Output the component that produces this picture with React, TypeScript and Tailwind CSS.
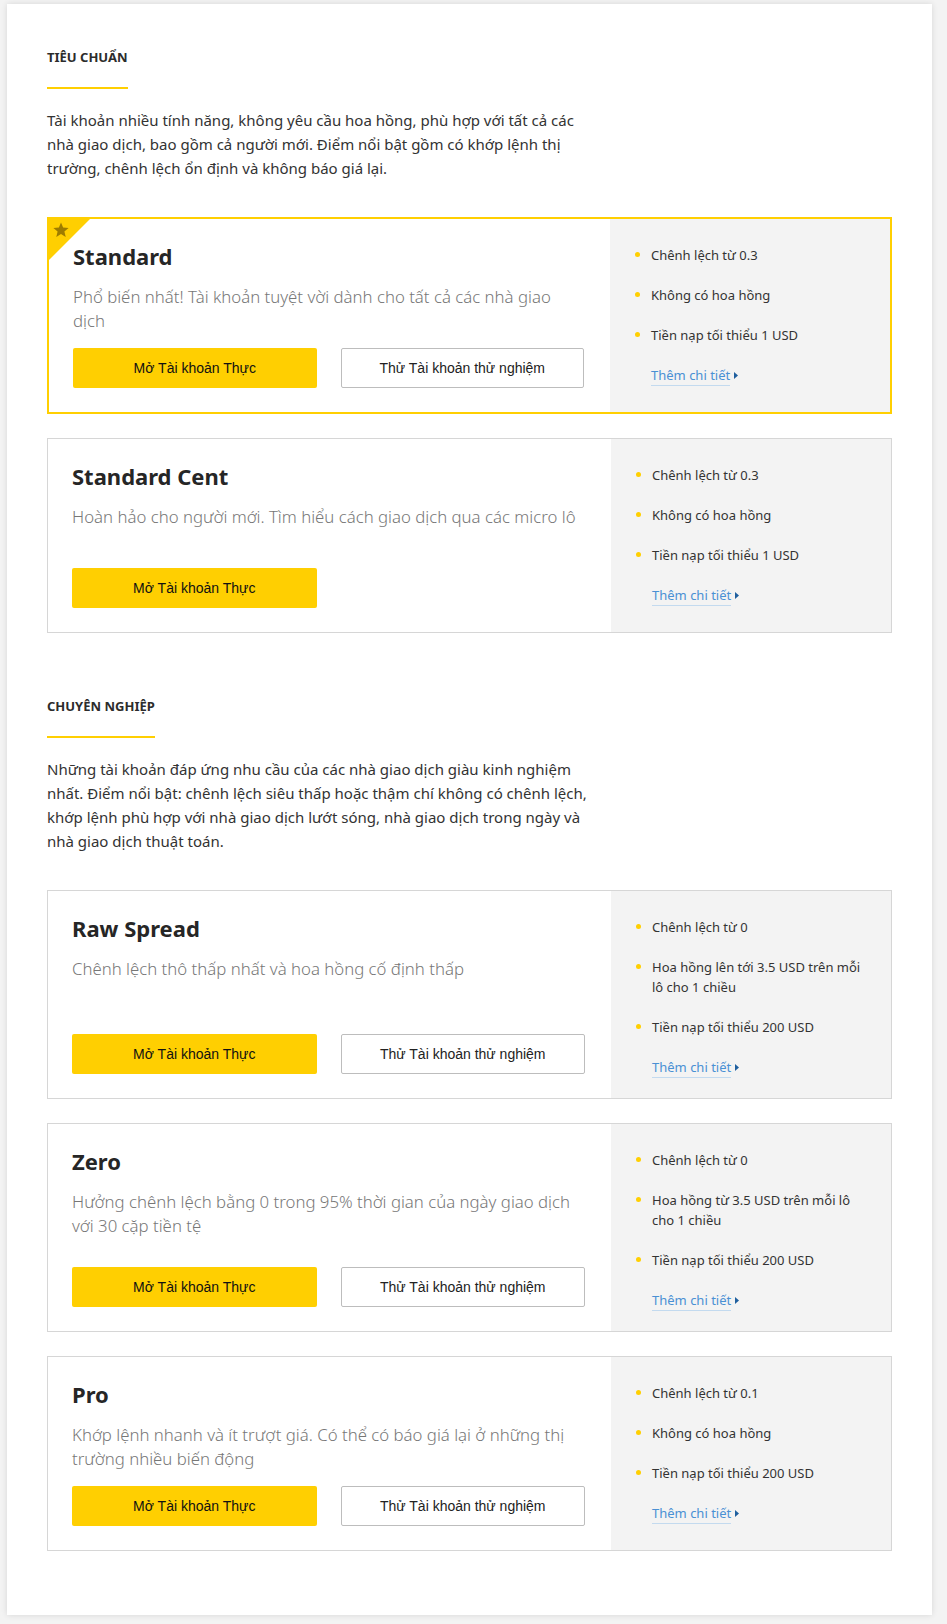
import React from "react"

type Account = {
  name: string
  desc: string[]
  features: string[][]
  demo: boolean
  featured?: boolean
}

const SECTIONS: { title: string; intro: string[]; accounts: Account[] }[] = [
  {
    title: "Tiêu chuẩn",
    intro: [
      "Tài khoản nhiều tính năng, không yêu cầu hoa hồng, phù hợp với tất cả các",
      "nhà giao dịch, bao gồm cả người mới. Điểm nổi bật gồm có khớp lệnh thị",
      "trường, chênh lệch ổn định và không báo giá lại.",
    ],
    accounts: [
      {
        name: "Standard",
        desc: ["Phổ biến nhất! Tài khoản tuyệt vời dành cho tất cả các nhà giao", "dịch"],
        features: [["Chênh lệch từ 0.3"], ["Không có hoa hồng"], ["Tiền nạp tối thiểu 1 USD"]],
        demo: true,
        featured: true,
      },
      {
        name: "Standard Cent",
        desc: ["Hoàn hảo cho người mới. Tìm hiểu cách giao dịch qua các micro lô"],
        features: [["Chênh lệch từ 0.3"], ["Không có hoa hồng"], ["Tiền nạp tối thiểu 1 USD"]],
        demo: false,
      },
    ],
  },
  {
    title: "Chuyên nghiệp",
    intro: [
      "Những tài khoản đáp ứng nhu cầu của các nhà giao dịch giàu kinh nghiệm",
      "nhất. Điểm nổi bật: chênh lệch siêu thấp hoặc thậm chí không có chênh lệch,",
      "khớp lệnh phù hợp với nhà giao dịch lướt sóng, nhà giao dịch trong ngày và",
      "nhà giao dịch thuật toán.",
    ],
    accounts: [
      {
        name: "Raw Spread",
        desc: ["Chênh lệch thô thấp nhất và hoa hồng cố định thấp"],
        features: [
          ["Chênh lệch từ 0"],
          ["Hoa hồng lên tới 3.5 USD trên mỗi", "lô cho 1 chiều"],
          ["Tiền nạp tối thiểu 200 USD"],
        ],
        demo: true,
      },
      {
        name: "Zero",
        desc: ["Hưởng chênh lệch bằng 0 trong 95% thời gian của ngày giao dịch", "với 30 cặp tiền tệ"],
        features: [
          ["Chênh lệch từ 0"],
          ["Hoa hồng từ 3.5 USD trên mỗi lô", "cho 1 chiều"],
          ["Tiền nạp tối thiểu 200 USD"],
        ],
        demo: true,
      },
      {
        name: "Pro",
        desc: ["Khớp lệnh nhanh và ít trượt giá. Có thể có báo giá lại ở những thị", "trường nhiều biến động"],
        features: [["Chênh lệch từ 0.1"], ["Không có hoa hồng"], ["Tiền nạp tối thiểu 200 USD"]],
        demo: true,
      },
    ],
  },
]

function Lines({ lines }: { lines: string[] }) {
  return (
    <>
      {lines.map((line, i) => (
        <React.Fragment key={i}>
          {i > 0 && <br />}
          {line}
        </React.Fragment>
      ))}
    </>
  )
}

function StarCorner() {
  return (
    <svg className="absolute left-0 top-0" width="41" height="41" viewBox="0 0 41 41">
      <polygon points="0,0 41,0 0,41" fill="#ffcf01" />
      <polygon
        points="12,3.5 14.1,8.6 19.6,9 15.4,12.6 16.7,18 12,15.1 7.3,18 8.6,12.6 4.4,9 9.9,8.6"
        fill="#9e7c00"
      />
    </svg>
  )
}

function AccountCard({ account }: { account: Account }) {
  return (
    <div
      className={`relative flex ${
        account.featured ? "border-2 border-[#ffcf01]" : "border border-[#d6d6d6]"
      }`}
    >
      {account.featured && <StarCorner />}

      {/* Left: name, text, buttons */}
      <div className="flex flex-1 flex-col pb-6 pl-6 pr-[26px] pt-[22px]">
        <h3 className="text-[22px] font-bold leading-[30px] text-[#262626]">{account.name}</h3>
        <p className="mt-[14px] min-h-[63px] flex-1 pb-[15px] text-[16.8px] font-light leading-6 text-[#777]">
          <Lines lines={account.desc} />
        </p>
        <div className="grid grid-cols-2 gap-6 font-['Liberation_Sans',Arial,sans-serif] text-[14px]">
          <button className="h-10 rounded-[2px] bg-[#ffcf01] text-[#111]">Mở Tài khoản Thực</button>
          {account.demo && (
            <button className="h-10 rounded-[2px] border border-[#bdbdbd] bg-white text-[#222]">
              Thử Tài khoản thử nghiệm
            </button>
          )}
        </div>
      </div>

      {/* Right: features */}
      <div className="w-[280px] shrink-0 bg-[#f3f3f3] pb-5 pl-[25px] pr-5 pt-[26px]">
        <ul className="flex flex-col gap-5 text-[13px] leading-5 text-[#333]">
          {account.features.map((f, i) => (
            <li key={i} className="flex items-start">
              <span className="mr-[11px] mt-[7px] h-[5px] w-[5px] shrink-0 rounded-full bg-[#ffcf01]" />
              <span>
                <Lines lines={f} />
              </span>
            </li>
          ))}
          <li className="flex items-center pl-4">
            <span className="border-b border-[#c3daef] text-[#4a90d4]">Thêm chi tiết</span>
            <svg className="ml-[4px]" width="4" height="7" viewBox="0 0 4 7">
              <polygon points="0,0 4,3.5 0,7" fill="#1f5f9e" />
            </svg>
          </li>
        </ul>
      </div>
    </div>
  )
}

export default function App() {
  return (
    <div className="min-h-screen bg-[#f3f3f3] pb-2 pl-[7px] pr-[15px] pt-1 font-['Noto_Sans',sans-serif]">
      <div className="flex flex-col gap-[60px] bg-white px-10 pb-16 pt-10 shadow-[0_0_6px_rgba(0,0,0,0.12)]">
        {SECTIONS.map((section) => (
          <section key={section.title}>
            <h2 className="inline-block border-b-2 border-[#ffcf01] pb-5 text-[13px] font-bold uppercase leading-5 text-[#2c2c2c]">
              {section.title}
            </h2>
            <p className="mt-[19px] text-[15px] leading-6 text-[#333]">
              <Lines lines={section.intro} />
            </p>
            <div className="mt-[37px] flex flex-col gap-6">
              {section.accounts.map((a) => (
                <AccountCard key={a.name} account={a} />
              ))}
            </div>
          </section>
        ))}
      </div>
    </div>
  )
}
